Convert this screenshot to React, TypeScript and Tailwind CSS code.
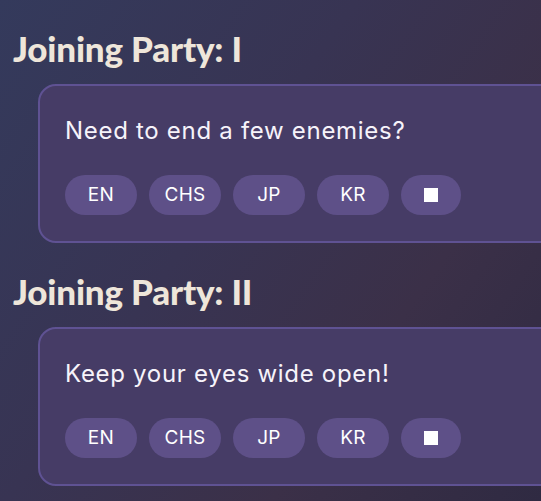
const langs = ["EN", "CHS", "JP", "KR"];

function VoiceCard({ line }: { line: string }) {
  return (
    <div className="ml-[25px] w-[540px] shrink-0 rounded-[18px] border-2 border-[#5f5293] bg-[#463c66] pl-[25px] pt-[29px] pb-[26px]">
      <p className="font-['Inter','Noto_Sans',sans-serif] text-[24px] leading-[32px] tracking-[0.7px] text-[#f6f3fa]">
        {line}
      </p>
      <div className="mt-[28px] flex gap-3">
        {langs.map((l) => (
          <button
            key={l}
            type="button"
            className="flex h-10 w-[72px] items-center justify-center rounded-full bg-[#5e5088] font-['Inter','Noto_Sans',sans-serif] text-[19px] tracking-[0.3px] text-white"
          >
            {l}
          </button>
        ))}
        <button
          type="button"
          className="flex h-10 w-[60px] items-center justify-center rounded-full bg-[#5e5088]"
        >
          <span className="block h-[14px] w-[14px] bg-white" />
        </button>
      </div>
    </div>
  );
}

function Section({ title, line }: { title: string; line: string }) {
  return (
    <section>
      <h2 className="font-['Lato',sans-serif] text-[35px] font-black leading-[40px] tracking-[-0.2px] text-[#eee6da]">
        {title}
      </h2>
      <div className="mt-4">
        <VoiceCard line={line} />
      </div>
    </section>
  );
}

export default function App() {
  return (
    <div className="h-[501px] w-[541px] overflow-hidden bg-[linear-gradient(125deg,#343a5c_0%,#383453_40%,#3b3048_70%,#2f2a42_100%)] pl-[13px] pt-[28px]">
      <div className="flex flex-col gap-[28px]">
        <Section title="Joining Party: I" line="Need to end a few enemies?" />
        <Section title="Joining Party: II" line="Keep your eyes wide open!" />
      </div>
    </div>
  );
}
